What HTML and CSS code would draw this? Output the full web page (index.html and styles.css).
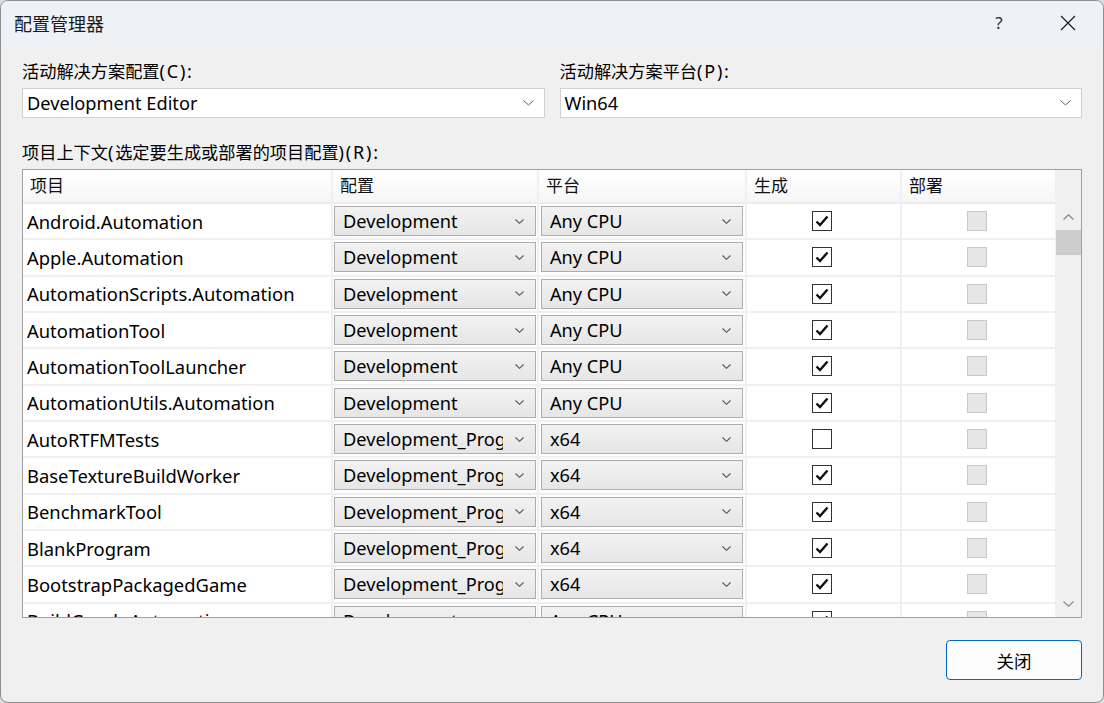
FILE: index.html
```html
<!DOCTYPE html>
<html lang="zh-CN">
<head>
<meta charset="utf-8">
<title>配置管理器</title>
<link rel="stylesheet" href="styles.css">
</head>
<body>
<div class="window">
  <div class="titlebar">
    <div class="title">配置管理器</div>
    <div class="help">?</div>
    <div class="close-x">
      <svg width="16" height="16" viewBox="0 0 16 16"><path d="M1 1 L15 15 M15 1 L1 15" stroke="#1a1a1a" stroke-width="1.2" fill="none"/></svg>
    </div>
  </div>
  <div class="content">
    <div class="top-fields">
      <div class="field">
        <div class="label"><span class="cjk">活动解决方案配置</span>(C):</div>
        <div class="combo">
          <span class="combo-text">Development Editor</span>
          <svg class="chev-lg" width="11" height="6" viewBox="0 0 11 6"><polyline points="0.5,0.5 5.5,5 10.5,0.5" fill="none" stroke="#606060" stroke-width="1"/></svg>
        </div>
      </div>
      <div class="field">
        <div class="label"><span class="cjk">活动解决方案平台</span>(P):</div>
        <div class="combo">
          <span class="combo-text">Win64</span>
          <svg class="chev-lg" width="11" height="6" viewBox="0 0 11 6"><polyline points="0.5,0.5 5.5,5 10.5,0.5" fill="none" stroke="#606060" stroke-width="1"/></svg>
        </div>
      </div>
    </div>
    <div class="label label-ctx"><span class="cjk">项目上下文</span>(<span class="cjk">选定要生成或部署的项目配置</span>)(R):</div>
    <div class="grid">
      <div class="thead">
        <div class="th">项目</div>
        <div class="th">配置</div>
        <div class="th">平台</div>
        <div class="th">生成</div>
        <div class="th th-last">部署</div>
        <div class="th-scroll"></div>
      </div>
      <div class="tbody">
        <div class="rows">
          <div class="row"><div class="cell name">Android.Automation</div><div class="cell"><div class="dd"><span class="dd-text">Development</span><svg class="chev" width="9" height="5" viewBox="0 0 9 5"><polyline points="0.5,0.5 4.5,4.3 8.5,0.5" fill="none" stroke="#555" stroke-width="1.1"/></svg></div></div><div class="cell"><div class="dd"><span class="dd-text pl">Any CPU</span><svg class="chev" width="9" height="5" viewBox="0 0 9 5"><polyline points="0.5,0.5 4.5,4.3 8.5,0.5" fill="none" stroke="#555" stroke-width="1.1"/></svg></div></div><div class="cell chk"><span class="cb on"><svg width="14" height="12" viewBox="0 0 14 12"><polyline points="1.5,6.5 5,10 12.5,1.5" fill="none" stroke="#111" stroke-width="2.4"/></svg></span></div><div class="cell chk last"><span class="cb dis"></span></div></div>
          <div class="row"><div class="cell name">Apple.Automation</div><div class="cell"><div class="dd"><span class="dd-text">Development</span><svg class="chev" width="9" height="5" viewBox="0 0 9 5"><polyline points="0.5,0.5 4.5,4.3 8.5,0.5" fill="none" stroke="#555" stroke-width="1.1"/></svg></div></div><div class="cell"><div class="dd"><span class="dd-text pl">Any CPU</span><svg class="chev" width="9" height="5" viewBox="0 0 9 5"><polyline points="0.5,0.5 4.5,4.3 8.5,0.5" fill="none" stroke="#555" stroke-width="1.1"/></svg></div></div><div class="cell chk"><span class="cb on"><svg width="14" height="12" viewBox="0 0 14 12"><polyline points="1.5,6.5 5,10 12.5,1.5" fill="none" stroke="#111" stroke-width="2.4"/></svg></span></div><div class="cell chk last"><span class="cb dis"></span></div></div>
          <div class="row"><div class="cell name">AutomationScripts.Automation</div><div class="cell"><div class="dd"><span class="dd-text">Development</span><svg class="chev" width="9" height="5" viewBox="0 0 9 5"><polyline points="0.5,0.5 4.5,4.3 8.5,0.5" fill="none" stroke="#555" stroke-width="1.1"/></svg></div></div><div class="cell"><div class="dd"><span class="dd-text pl">Any CPU</span><svg class="chev" width="9" height="5" viewBox="0 0 9 5"><polyline points="0.5,0.5 4.5,4.3 8.5,0.5" fill="none" stroke="#555" stroke-width="1.1"/></svg></div></div><div class="cell chk"><span class="cb on"><svg width="14" height="12" viewBox="0 0 14 12"><polyline points="1.5,6.5 5,10 12.5,1.5" fill="none" stroke="#111" stroke-width="2.4"/></svg></span></div><div class="cell chk last"><span class="cb dis"></span></div></div>
          <div class="row"><div class="cell name">AutomationTool</div><div class="cell"><div class="dd"><span class="dd-text">Development</span><svg class="chev" width="9" height="5" viewBox="0 0 9 5"><polyline points="0.5,0.5 4.5,4.3 8.5,0.5" fill="none" stroke="#555" stroke-width="1.1"/></svg></div></div><div class="cell"><div class="dd"><span class="dd-text pl">Any CPU</span><svg class="chev" width="9" height="5" viewBox="0 0 9 5"><polyline points="0.5,0.5 4.5,4.3 8.5,0.5" fill="none" stroke="#555" stroke-width="1.1"/></svg></div></div><div class="cell chk"><span class="cb on"><svg width="14" height="12" viewBox="0 0 14 12"><polyline points="1.5,6.5 5,10 12.5,1.5" fill="none" stroke="#111" stroke-width="2.4"/></svg></span></div><div class="cell chk last"><span class="cb dis"></span></div></div>
          <div class="row"><div class="cell name">AutomationToolLauncher</div><div class="cell"><div class="dd"><span class="dd-text">Development</span><svg class="chev" width="9" height="5" viewBox="0 0 9 5"><polyline points="0.5,0.5 4.5,4.3 8.5,0.5" fill="none" stroke="#555" stroke-width="1.1"/></svg></div></div><div class="cell"><div class="dd"><span class="dd-text pl">Any CPU</span><svg class="chev" width="9" height="5" viewBox="0 0 9 5"><polyline points="0.5,0.5 4.5,4.3 8.5,0.5" fill="none" stroke="#555" stroke-width="1.1"/></svg></div></div><div class="cell chk"><span class="cb on"><svg width="14" height="12" viewBox="0 0 14 12"><polyline points="1.5,6.5 5,10 12.5,1.5" fill="none" stroke="#111" stroke-width="2.4"/></svg></span></div><div class="cell chk last"><span class="cb dis"></span></div></div>
          <div class="row"><div class="cell name">AutomationUtils.Automation</div><div class="cell"><div class="dd"><span class="dd-text">Development</span><svg class="chev" width="9" height="5" viewBox="0 0 9 5"><polyline points="0.5,0.5 4.5,4.3 8.5,0.5" fill="none" stroke="#555" stroke-width="1.1"/></svg></div></div><div class="cell"><div class="dd"><span class="dd-text pl">Any CPU</span><svg class="chev" width="9" height="5" viewBox="0 0 9 5"><polyline points="0.5,0.5 4.5,4.3 8.5,0.5" fill="none" stroke="#555" stroke-width="1.1"/></svg></div></div><div class="cell chk"><span class="cb on"><svg width="14" height="12" viewBox="0 0 14 12"><polyline points="1.5,6.5 5,10 12.5,1.5" fill="none" stroke="#111" stroke-width="2.4"/></svg></span></div><div class="cell chk last"><span class="cb dis"></span></div></div>
          <div class="row"><div class="cell name">AutoRTFMTests</div><div class="cell"><div class="dd"><span class="dd-text">Development_Program</span><svg class="chev" width="9" height="5" viewBox="0 0 9 5"><polyline points="0.5,0.5 4.5,4.3 8.5,0.5" fill="none" stroke="#555" stroke-width="1.1"/></svg></div></div><div class="cell"><div class="dd"><span class="dd-text pl">x64</span><svg class="chev" width="9" height="5" viewBox="0 0 9 5"><polyline points="0.5,0.5 4.5,4.3 8.5,0.5" fill="none" stroke="#555" stroke-width="1.1"/></svg></div></div><div class="cell chk"><span class="cb"></span></div><div class="cell chk last"><span class="cb dis"></span></div></div>
          <div class="row"><div class="cell name">BaseTextureBuildWorker</div><div class="cell"><div class="dd"><span class="dd-text">Development_Program</span><svg class="chev" width="9" height="5" viewBox="0 0 9 5"><polyline points="0.5,0.5 4.5,4.3 8.5,0.5" fill="none" stroke="#555" stroke-width="1.1"/></svg></div></div><div class="cell"><div class="dd"><span class="dd-text pl">x64</span><svg class="chev" width="9" height="5" viewBox="0 0 9 5"><polyline points="0.5,0.5 4.5,4.3 8.5,0.5" fill="none" stroke="#555" stroke-width="1.1"/></svg></div></div><div class="cell chk"><span class="cb on"><svg width="14" height="12" viewBox="0 0 14 12"><polyline points="1.5,6.5 5,10 12.5,1.5" fill="none" stroke="#111" stroke-width="2.4"/></svg></span></div><div class="cell chk last"><span class="cb dis"></span></div></div>
          <div class="row"><div class="cell name">BenchmarkTool</div><div class="cell"><div class="dd"><span class="dd-text">Development_Program</span><svg class="chev" width="9" height="5" viewBox="0 0 9 5"><polyline points="0.5,0.5 4.5,4.3 8.5,0.5" fill="none" stroke="#555" stroke-width="1.1"/></svg></div></div><div class="cell"><div class="dd"><span class="dd-text pl">x64</span><svg class="chev" width="9" height="5" viewBox="0 0 9 5"><polyline points="0.5,0.5 4.5,4.3 8.5,0.5" fill="none" stroke="#555" stroke-width="1.1"/></svg></div></div><div class="cell chk"><span class="cb on"><svg width="14" height="12" viewBox="0 0 14 12"><polyline points="1.5,6.5 5,10 12.5,1.5" fill="none" stroke="#111" stroke-width="2.4"/></svg></span></div><div class="cell chk last"><span class="cb dis"></span></div></div>
          <div class="row"><div class="cell name">BlankProgram</div><div class="cell"><div class="dd"><span class="dd-text">Development_Program</span><svg class="chev" width="9" height="5" viewBox="0 0 9 5"><polyline points="0.5,0.5 4.5,4.3 8.5,0.5" fill="none" stroke="#555" stroke-width="1.1"/></svg></div></div><div class="cell"><div class="dd"><span class="dd-text pl">x64</span><svg class="chev" width="9" height="5" viewBox="0 0 9 5"><polyline points="0.5,0.5 4.5,4.3 8.5,0.5" fill="none" stroke="#555" stroke-width="1.1"/></svg></div></div><div class="cell chk"><span class="cb on"><svg width="14" height="12" viewBox="0 0 14 12"><polyline points="1.5,6.5 5,10 12.5,1.5" fill="none" stroke="#111" stroke-width="2.4"/></svg></span></div><div class="cell chk last"><span class="cb dis"></span></div></div>
          <div class="row"><div class="cell name">BootstrapPackagedGame</div><div class="cell"><div class="dd"><span class="dd-text">Development_Program</span><svg class="chev" width="9" height="5" viewBox="0 0 9 5"><polyline points="0.5,0.5 4.5,4.3 8.5,0.5" fill="none" stroke="#555" stroke-width="1.1"/></svg></div></div><div class="cell"><div class="dd"><span class="dd-text pl">x64</span><svg class="chev" width="9" height="5" viewBox="0 0 9 5"><polyline points="0.5,0.5 4.5,4.3 8.5,0.5" fill="none" stroke="#555" stroke-width="1.1"/></svg></div></div><div class="cell chk"><span class="cb on"><svg width="14" height="12" viewBox="0 0 14 12"><polyline points="1.5,6.5 5,10 12.5,1.5" fill="none" stroke="#111" stroke-width="2.4"/></svg></span></div><div class="cell chk last"><span class="cb dis"></span></div></div>
          <div class="row"><div class="cell name">BuildGraph.Automation</div><div class="cell"><div class="dd"><span class="dd-text">Development</span><svg class="chev" width="9" height="5" viewBox="0 0 9 5"><polyline points="0.5,0.5 4.5,4.3 8.5,0.5" fill="none" stroke="#555" stroke-width="1.1"/></svg></div></div><div class="cell"><div class="dd"><span class="dd-text pl">Any CPU</span><svg class="chev" width="9" height="5" viewBox="0 0 9 5"><polyline points="0.5,0.5 4.5,4.3 8.5,0.5" fill="none" stroke="#555" stroke-width="1.1"/></svg></div></div><div class="cell chk"><span class="cb on"><svg width="14" height="12" viewBox="0 0 14 12"><polyline points="1.5,6.5 5,10 12.5,1.5" fill="none" stroke="#111" stroke-width="2.4"/></svg></span></div><div class="cell chk last"><span class="cb dis"></span></div></div>
        </div>
        <div class="scroll">
          <div class="sbtn"><svg width="11" height="6" viewBox="0 0 11 6"><polyline points="0.5,5.5 5.5,0.8 10.5,5.5" fill="none" stroke="#8c8c8c" stroke-width="1.3"/></svg></div>
          <div class="thumb"></div>
          <div class="strack"></div>
          <div class="sbtn"><svg width="11" height="6" viewBox="0 0 11 6"><polyline points="0.5,0.5 5.5,5.2 10.5,0.5" fill="none" stroke="#8c8c8c" stroke-width="1.3"/></svg></div>
        </div>
      </div>
    </div>
    <div class="footer">
      <button class="btn">关闭</button>
    </div>
  </div>
</div>
</body>
</html>
```
FILE: styles.css
```css
* { box-sizing: border-box; }
html, body { margin: 0; padding: 0; }
body {
  background: #dcdcdc;
  font-family: "Noto Sans", "Noto Sans CJK SC", sans-serif;
  color: #000;
}
.window {
  width: 1104px;
  height: 703px;
  border: 1px solid #8e8e8e;
  border-radius: 8px;
  background: #f0f0f0;
  overflow: hidden;
  display: flex;
  flex-direction: column;
}
.titlebar {
  height: 44px;
  background: #eef2f7;
  display: flex;
  align-items: center;
  padding-left: 13px;
}
.title {
  font-family: "Noto Sans CJK SC", sans-serif;
  font-size: 18px;
  line-height: 20px;
  color: #1a1a1a;
  flex: 1;
  margin-top: -1px;
}
.help {
  font-family: "Noto Sans", sans-serif;
  font-size: 17px;
  color: #2a2a2a;
  width: 20px;
  text-align: center;
  margin-right: 51px;
  margin-top: -1px;
}
.close-x {
  width: 16px;
  height: 16px;
  margin-right: 27px;
  display: flex;
}
.content {
  flex: 1;
  padding: 0 21px;
  display: flex;
  flex-direction: column;
}
.top-fields {
  display: grid;
  grid-template-columns: 1fr 1fr;
  column-gap: 15px;
  padding-top: 15px;
}
.label {
  font-size: 18px;
  letter-spacing: 1.8px;
  line-height: 22px;
  height: 22px;
  white-space: nowrap;
  color: #000;
}
.cjk {
  font-family: "Noto Sans CJK SC", sans-serif;
  font-size: 17.2px;
  letter-spacing: 0;
}
.combo {
  margin-top: 6px;
  height: 30px;
  background: #fff;
  border: 1px solid #d0d0d0;
  display: flex;
  align-items: center;
  padding: 0 10px 0 4px;
}
.combo-text {
  flex: 1;
  font-size: 18.2px;
  line-height: 22px;
}
.label-ctx {
  margin-top: 23px;
}
.grid {
  margin-top: 6px;
  height: 449px;
  border: 1px solid #a0a0a0;
  background: #fff;
  display: flex;
  flex-direction: column;
}
.thead {
  display: grid;
  grid-template-columns: 310px 206px 208px 155px 153px 26px;
  height: 34px;
  flex: none;
}
.th {
  background: linear-gradient(#ffffff, #f6f6f6);
  border-right: 2px solid #f0f0f0;
  border-bottom: 2px solid #ececec;
  font-family: "Noto Sans CJK SC", sans-serif;
  font-size: 17px;
  line-height: 30px;
  padding-left: 7px;
  color: #111;
}
.th-last { border-right: none; }
.th-scroll { background: #f0f0f0; }
.tbody {
  flex: 1;
  display: flex;
  min-height: 0;
}
.rows {
  width: 1032px;
  overflow: hidden;
}
.row {
  display: grid;
  grid-template-columns: 310px 206px 208px 155px 153px;
  height: 36.33px;
  border-bottom: 2px solid #f0f0f0;
}
.cell {
  border-right: 2px solid #f0f0f0;
  display: flex;
  align-items: center;
  min-width: 0;
}
.cell.last { border-right: none; }
.cell.name {
  padding-left: 4px;
  font-size: 18.4px;
  white-space: nowrap;
  overflow: hidden;
}
.dd {
  width: 202px;
  height: 30px;
  margin-left: 1px;
  border: 1px solid #adadad;
  background: linear-gradient(#f2f2f2, #e6e6e6);
  display: flex;
  align-items: center;
  padding-right: 11px;
}
.dd-text {
  flex: 1;
  min-width: 0;
  overflow: hidden;
  white-space: nowrap;
  font-size: 18.2px;
  line-height: 22px;
  padding-left: 8px;
  margin-right: 12px;
}
.dd-text.pl { padding-left: 8px; }
.cell:nth-child(3) .dd { width: 202px; margin-left: 2px; }
.chk { justify-content: center; padding-right: 4px; }
.cb {
  width: 20px;
  height: 20px;
  border: 1px solid #333;
  background: #fff;
  display: flex;
  align-items: center;
  justify-content: center;
}
.cb.dis {
  border-color: #c8c8c8;
  background: #e6e6e6;
}
.scroll {
  width: 26px;
  background: #f0f0f0;
  display: flex;
  flex-direction: column;
}
.sbtn {
  height: 26px;
  flex: none;
  display: flex;
  align-items: center;
  justify-content: center;
}
.thumb {
  height: 25px;
  flex: none;
  background: #cdcdcd;
  margin-left: 1px;
}
.strack { flex: 1; }
.footer {
  margin-top: 22px;
  display: flex;
  justify-content: flex-end;
}
.btn {
  width: 136px;
  height: 40px;
  background: #fdfdfd;
  border: 1px solid #0067c0;
  border-radius: 4px;
  font-family: "Noto Sans CJK SC", sans-serif;
  font-size: 17.5px;
  color: #000;
  padding: 0;
}
```
